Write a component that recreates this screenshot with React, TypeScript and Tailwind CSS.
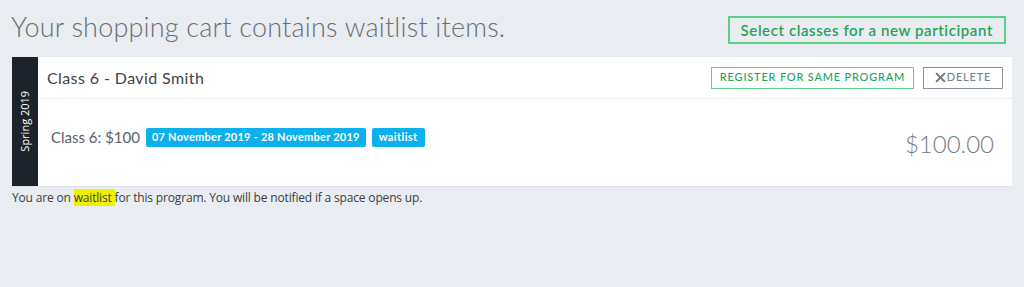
import React from "react";

export default function App() {
  return (
    <div className="w-[1024px] h-[287px] bg-[#e9ecf0] overflow-hidden" style={{ fontFamily: "Lato, 'Open Sans', sans-serif" }}>
      <div className="flex items-start justify-between pl-[11px] pr-[18px] pt-[9px]">
        <h1 className="text-[27px] font-light text-[#6b6f76] leading-[36px] tracking-[0.2px]">Your shopping cart contains waitlist items.</h1>
        <button className="mt-[7px] h-[28px] px-[11px] border-2 border-[#5ccf8a] text-[#27a35a] text-[15px] leading-none font-semibold tracking-[0.6px] bg-transparent">
          Select classes for a new participant
        </button>
      </div>
      <div className="mt-[12px] ml-[12px] w-[1000px] flex bg-white h-[129px]">
        <div className="w-[26px] bg-[#1d232b] flex items-center justify-center">
          <span className="-rotate-90 whitespace-nowrap text-white text-[11px]" style={{ fontFamily: "'Open Sans', sans-serif" }}>Spring 2019</span>
        </div>
        <div className="flex-1 flex flex-col">
          <div className="h-[42px] flex items-center justify-between pl-[9px] pr-[9px] border-b border-[#eceef1]">
            <span className="text-[16px] text-[#3e4349] tracking-[0.4px]">Class 6 - David Smith</span>
            <div className="flex items-center gap-[9px]">
              <button className="h-[22px] w-[203px] flex items-center justify-center border border-[#5ccf8a] text-[#27a35a] text-[11px] tracking-[0.8px] font-medium">REGISTER FOR SAME PROGRAM</button>
              <button className="h-[22px] w-[80px] flex items-center justify-center border border-[#8a929b] text-[#7a828b] text-[11px] tracking-[0.8px] font-medium">
                <svg width="11" height="11" viewBox="0 0 10 10" className="mr-[1px]"><path d="M1 1L9 9M9 1L1 9" stroke="#6f7780" strokeWidth="1.8" /></svg>
                DELETE
              </button>
            </div>
          </div>
          <div className="flex-1 flex items-center justify-between pl-[13px] pr-[18px]">
            <div className="flex items-center gap-[6px] -mt-[11px]">
              <span className="text-[15px] text-[#5b6068]">Class 6: $100</span>
              <span className="h-[19px] px-[6px] flex items-center bg-[#0bb0ec] text-white text-[11px] font-bold tracking-[0.25px] rounded-[2px]">07 November 2019 - 28 November 2019</span>
              <span className="h-[19px] px-[7px] flex items-center bg-[#0bb0ec] text-white text-[11px] font-bold tracking-[0.4px] rounded-[2px]">waitlist</span>
            </div>
            <span className="text-[24px] font-light text-[#777c83] mt-[2px]">$100.00</span>
          </div>
        </div>
      </div>
      <div className="w-[1000px] ml-[12px] h-px bg-[#dfe2e6]" />
      <p className="pl-[12px] mt-[2px] text-[12px] tracking-[-0.17px] text-[#3b3f44]" style={{ fontFamily: "'Open Sans', sans-serif" }}>
        You are on <span className="bg-[#f0f000]">waitlist </span>for this program. You will be notified if a space opens up.
      </p>
    </div>
  );
}
